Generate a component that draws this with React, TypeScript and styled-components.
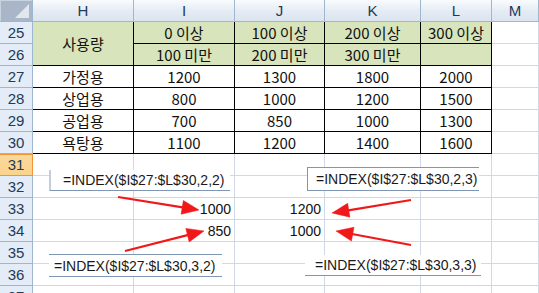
import React from 'react';
import styled, { createGlobalStyle, css } from 'styled-components';

const GlobalStyle = createGlobalStyle`
  html, body {
    margin: 0;
    padding: 0;
    background: #ffffff;
    overflow: hidden;
  }
`;

const GRID = '#d0d7e5';
const HEAD_LINE = '#9eb6ce';
const CELL_FONT = `"Noto Sans CJK KR", "Noto Sans", sans-serif`;
const LATIN_FONT = `"Liberation Sans", Arial, sans-serif`;

const Sheet = styled.div`
  position: relative;
  width: 539px;
  height: 293px;
  overflow: hidden;
  display: grid;
  grid-template-columns: 33px 101px 101px 90px 96px 71px 1fr;
  grid-auto-rows: 22px;
  background: #ffffff;
`;

const Corner = styled.div`
  position: relative;
  box-sizing: border-box;
  background: #a9b6c8;
  border-right: 1px solid ${HEAD_LINE};
  border-bottom: 1px solid ${HEAD_LINE};
  box-shadow: inset 1px 1px 0 #c9d3e0;

  &::after {
    content: '';
    position: absolute;
    right: 3px;
    bottom: 3px;
    width: 14px;
    height: 14px;
    background: #e2e7ee;
    clip-path: polygon(100% 0, 100% 100%, 0 100%);
  }
`;

const ColHeader = styled.div`
  box-sizing: border-box;
  display: flex;
  align-items: center;
  justify-content: center;
  background: linear-gradient(#f9fbfd, #e4ebf4 55%, #dbe4ef);
  border-right: 1px solid ${HEAD_LINE};
  border-bottom: 1px solid ${HEAD_LINE};
  font-family: ${LATIN_FONT};
  font-size: 15px;
  color: #1f3a5a;
`;

const RowHeader = styled.div<{ $active?: boolean }>`
  box-sizing: border-box;
  display: flex;
  align-items: center;
  justify-content: center;
  background: #e4ecf7;
  border-right: 1px solid ${HEAD_LINE};
  border-bottom: 1px solid ${HEAD_LINE};
  font-family: ${LATIN_FONT};
  font-size: 15px;
  color: #1f3a5a;

  ${p =>
    p.$active &&
    css`
      background: linear-gradient(#f9d99e, #fbd38a);
      border-right-color: #f29536;
      border-bottom-color: #f29536;
      box-shadow: inset 0 1px 0 #f29536;
    `}
`;

const Cell = styled.div<{
  $fill?: boolean;
  $table?: boolean;
  $align?: 'center' | 'right';
  $span?: number;
  $latin?: boolean;
}>`
  box-sizing: border-box;
  display: flex;
  align-items: center;
  justify-content: ${p => (p.$align === 'right' ? 'flex-end' : 'center')};
  padding: 0 3px;
  grid-row: span ${p => p.$span ?? 1};
  background: ${p => (p.$fill ? '#d8e4bc' : '#ffffff')};
  border-right: 1px solid ${p => (p.$table ? '#000000' : GRID)};
  border-bottom: 1px solid ${p => (p.$table ? '#000000' : GRID)};
  font-family: ${p => (p.$latin ? LATIN_FONT : CELL_FONT)};
  font-size: ${p => (p.$latin ? 14 : 15)}px;
  color: #111111;
  white-space: nowrap;
`;

/* floating text boxes holding the formulas */
const FormulaBox = styled.div<{
  $left: number;
  $top: number;
  $width: number;
  $height: number;
  $sides: string;
  $pad: number;
}>`
  position: absolute;
  box-sizing: border-box;
  left: ${p => p.$left}px;
  top: ${p => p.$top}px;
  width: ${p => p.$width}px;
  height: ${p => p.$height}px;
  padding-left: ${p => p.$pad}px;
  display: flex;
  align-items: center;
  background: #ffffff;
  font-family: ${LATIN_FONT};
  font-size: 14px;
  color: #1a1a1a;
  white-space: nowrap;
  ${p => p.$sides.includes('t') && css`border-top: 1px solid #7f96b5;`}
  ${p => p.$sides.includes('b') && css`border-bottom: 1px solid #7f96b5;`}
  ${p => p.$sides.includes('l') && css`border-left: 1px solid #7f96b5;`}
  ${p => p.$sides.includes('g') && css`border-left: 2px solid #c3cedc;`}
`;

const Overlay = styled.svg`
  position: absolute;
  left: 0;
  top: 0;
  pointer-events: none;
`;

type CellDef = {
  text?: string;
  fill?: boolean;
  table?: boolean;
  align?: 'center' | 'right';
  span?: number;
  latin?: boolean;
  skip?: boolean;
};

const columns = ['H', 'I', 'J', 'K', 'L', 'M'];

const header25 = ['사용량', '0 이상', '100 이상', '200 이상', '300 이상'];
const header26 = ['', '100 미만', '200 미만', '300 미만', ''];
const usage: [string, string[]][] = [
  ['가정용', ['1200', '1300', '1800', '2000']],
  ['상업용', ['800', '1000', '1200', '1500']],
  ['공업용', ['700', '850', '1000', '1300']],
  ['욕탕용', ['1100', '1200', '1400', '1600']],
];

const lookups: Record<number, string[]> = {
  33: ['', '1000', '1200'],
  34: ['', '850', '1000'],
};

function buildRow(row: number): CellDef[] {
  const cells: CellDef[] = [];
  for (let c = 0; c < columns.length; c++) {
    if (row === 25 || row === 26) {
      if (c === 5) cells.push({});
      else if (c === 0 && row === 26) cells.push({ skip: true });
      else if (c === 0) cells.push({ text: header25[0], fill: true, table: true, span: 2 });
      else
        cells.push({
          text: row === 25 ? header25[c] : header26[c],
          fill: true,
          table: true,
        });
    } else if (row >= 27 && row <= 30) {
      const [name, vals] = usage[row - 27];
      if (c === 5) cells.push({});
      else cells.push({ text: c === 0 ? name : vals[c - 1], table: true });
    } else if (lookups[row] && lookups[row][c]) {
      cells.push({ text: lookups[row][c], align: 'right', latin: true });
    } else {
      cells.push({});
    }
  }
  return cells;
}

const rows = Array.from({ length: 13 }, (_, i) => 25 + i);

type Arrow = { x1: number; y1: number; x2: number; y2: number };

const arrows: Arrow[] = [
  { x1: 118, y1: 197, x2: 199, y2: 210 },
  { x1: 125, y1: 251, x2: 204, y2: 231 },
  { x1: 411, y1: 200, x2: 332, y2: 213 },
  { x1: 411, y1: 245, x2: 336, y2: 231 },
];

function ArrowShape({ x1, y1, x2, y2 }: Arrow) {
  const len = 17;
  const half = 7;
  const dx = x2 - x1;
  const dy = y2 - y1;
  const d = Math.hypot(dx, dy);
  const ux = dx / d;
  const uy = dy / d;
  const bx = x2 - ux * len;
  const by = y2 - uy * len;
  const pts = [
    [x2, y2],
    [bx - uy * half, by + ux * half],
    [bx + uy * half, by - ux * half],
  ]
    .map(p => p.join(','))
    .join(' ');
  return (
    <g fill="#f01818" stroke="#f01818">
      <line x1={x1} y1={y1} x2={bx + ux * 2} y2={by + uy * 2} strokeWidth={2.2} />
      <polygon points={pts} strokeWidth={0.5} />
    </g>
  );
}

export default function App() {
  return (
    <>
      <GlobalStyle />
      <Sheet>
        <Corner />
        {columns.map(c => (
          <ColHeader key={c}>{c}</ColHeader>
        ))}

        {rows.map(r => (
          <React.Fragment key={r}>
            <RowHeader $active={r === 31}>{r}</RowHeader>
            {buildRow(r).map((cell, i) =>
              cell.skip ? null : (
                <Cell
                  key={i}
                  $fill={cell.fill}
                  $table={cell.table}
                  $align={cell.align}
                  $span={cell.span}
                  $latin={cell.latin}
                >
                  {cell.text}
                </Cell>
              )
            )}
          </React.Fragment>
        ))}

        <FormulaBox $left={49} $top={170} $width={181} $height={21} $sides="gb" $pad={12}>
          =INDEX($I$27:$L$30,2,2)
        </FormulaBox>
        <FormulaBox $left={307} $top={167} $width={172} $height={24} $sides="tlb" $pad={8}>
          =INDEX($I$27:$L$30,2,3)
        </FormulaBox>
        <FormulaBox $left={49} $top={254} $width={173} $height={23} $sides="tb" $pad={5}>
          =INDEX($I$27:$L$30,3,2)
        </FormulaBox>
        <FormulaBox $left={305} $top={255} $width={176} $height={21} $sides="b" $pad={10}>
          =INDEX($I$27:$L$30,3,3)
        </FormulaBox>

        <Overlay width={539} height={293} viewBox="0 0 539 293">
          {arrows.map((a, i) => (
            <ArrowShape key={i} {...a} />
          ))}
        </Overlay>
      </Sheet>
    </>
  );
}
